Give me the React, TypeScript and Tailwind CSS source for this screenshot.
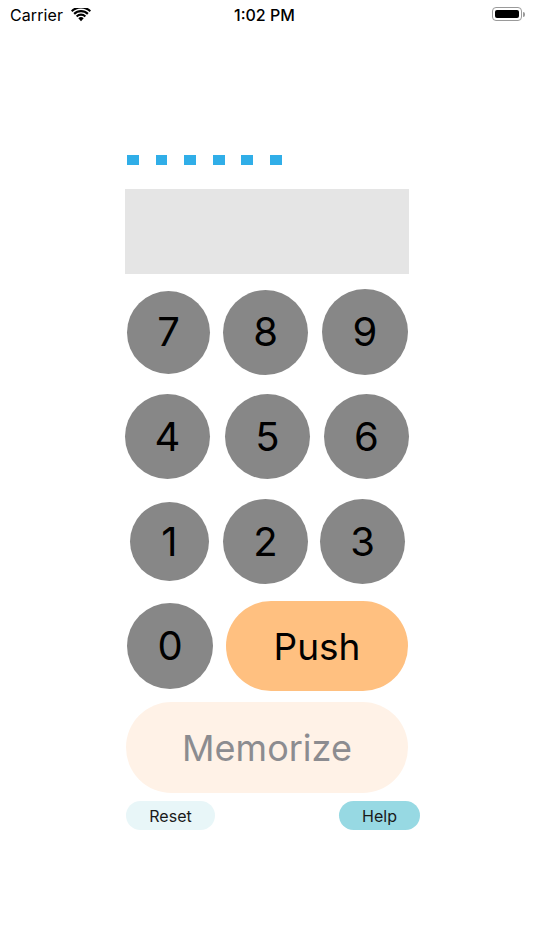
import { FC, ReactNode } from 'react';

const font = { fontFamily: 'Inter, "Noto Sans", sans-serif' };

const Key: FC<{ label: string; className?: string }> = ({ label, className }) => (
  <button
    className={`rounded-full bg-[#878787] text-black text-[40px] leading-none flex items-center justify-center shrink-0 ${className}`}
  >
    {label}
  </button>
);

const Row: FC<{ className?: string; children: ReactNode }> = ({ className, children }) => (
  <div className={`flex items-center ${className}`}>{children}</div>
);

const StatusBar: FC = () => (
  <div className="relative h-[30px] flex items-center px-[10px] text-black">
    <span className="text-[16px] tracking-[0.1px]">Carrier</span>
    <svg width="20" height="14" viewBox="0 0 20 14" className="ml-[8px] mt-[-1px]">
      <path d="M10 13.2 L7.3 10.3 A3.9 3.9 0 0 1 12.7 10.3 Z" fill="black" />
      <path d="M4.9 7.7 A7.3 7.3 0 0 1 15.1 7.7 L13.6 9.3 A5.2 5.2 0 0 0 6.4 9.3 Z" fill="black" />
      <path d="M2.4 5.1 A10.8 10.8 0 0 1 17.6 5.1 L16.1 6.7 A8.7 8.7 0 0 0 3.9 6.7 Z" fill="black" />
      <path d="M0 2.5 A14.3 14.3 0 0 1 20 2.5 L18.6 4.0 A12.2 12.2 0 0 0 1.4 4.0 Z" fill="black" />
    </svg>
    <span className="absolute left-[234px] text-[16px] font-medium">1:02 PM</span>
    <div className="absolute left-[492px] top-[7px] flex items-center">
      <div className="w-[30px] h-[14px] rounded-[4px] border border-[#9a9a9a] p-[2px]">
        <div className="w-full h-full rounded-[2px] bg-black" />
      </div>
      <div className="w-[2px] h-[5px] rounded-r-sm bg-[#9a9a9a] ml-[1px]" />
    </div>
  </div>
);

export default function App() {
  return (
    <div className="w-[534px] h-[950px] bg-white overflow-hidden" style={font}>
      <StatusBar />
      <div className="ml-[125px] flex flex-col">
        <div className="flex gap-[16.8px] ml-[2px] mt-[125px]">
          {[0, 1, 2, 3, 4, 5].map((i) => (
            <div key={i} className="w-[11.8px] h-[10px] bg-[#30aee8]" />
          ))}
        </div>
        <div className="w-[284px] h-[85px] bg-[#e5e5e5] mt-[24px]" />

        <Row className="h-[86px] mt-[15px]">
          <Key label="7" className="w-[83px] h-[83px] ml-[2px]" />
          <Key label="8" className="w-[85px] h-[85px] ml-[13px]" />
          <Key label="9" className="w-[86px] h-[86px] ml-[14px]" />
        </Row>
        <Row className="h-[85px] mt-[19px]">
          <Key label="4" className="w-[85px] h-[85px]" />
          <Key label="5" className="w-[85px] h-[85px] ml-[15px]" />
          <Key label="6" className="w-[85px] h-[85px] ml-[14px]" />
        </Row>
        <Row className="h-[85px] mt-[20px]">
          <Key label="1" className="w-[79px] h-[79px] ml-[5px]" />
          <Key label="2" className="w-[85px] h-[85px] ml-[14px]" />
          <Key label="3" className="w-[85px] h-[85px] ml-[12px]" />
        </Row>
        <Row className="h-[90px] mt-[17px]">
          <Key label="0" className="w-[86px] h-[86px] ml-[2px]" />
          <button className="w-[182px] h-[90px] ml-[13px] rounded-full bg-[#ffc080] text-black text-[37px] leading-none flex items-center justify-center">
            Push
          </button>
        </Row>
        <button className="w-[282px] h-[91px] ml-[1px] mt-[11px] rounded-full bg-[#fff2e7] text-[#8c8c90] text-[36px] leading-none flex items-center justify-center">
          Memorize
        </button>
        <div className="flex items-center mt-[8px] w-[294px] ml-[1px]">
          <button className="w-[89px] h-[29px] rounded-full bg-[#e8f6f8] text-[#1a1a1a] text-[16px] leading-none flex items-center justify-center">
            Reset
          </button>
          <button className="w-[81px] h-[29px] ml-auto rounded-full bg-[#97d9e3] text-[#1a1a1a] text-[16px] leading-none flex items-center justify-center">
            Help
          </button>
        </div>
      </div>
    </div>
  );
}
